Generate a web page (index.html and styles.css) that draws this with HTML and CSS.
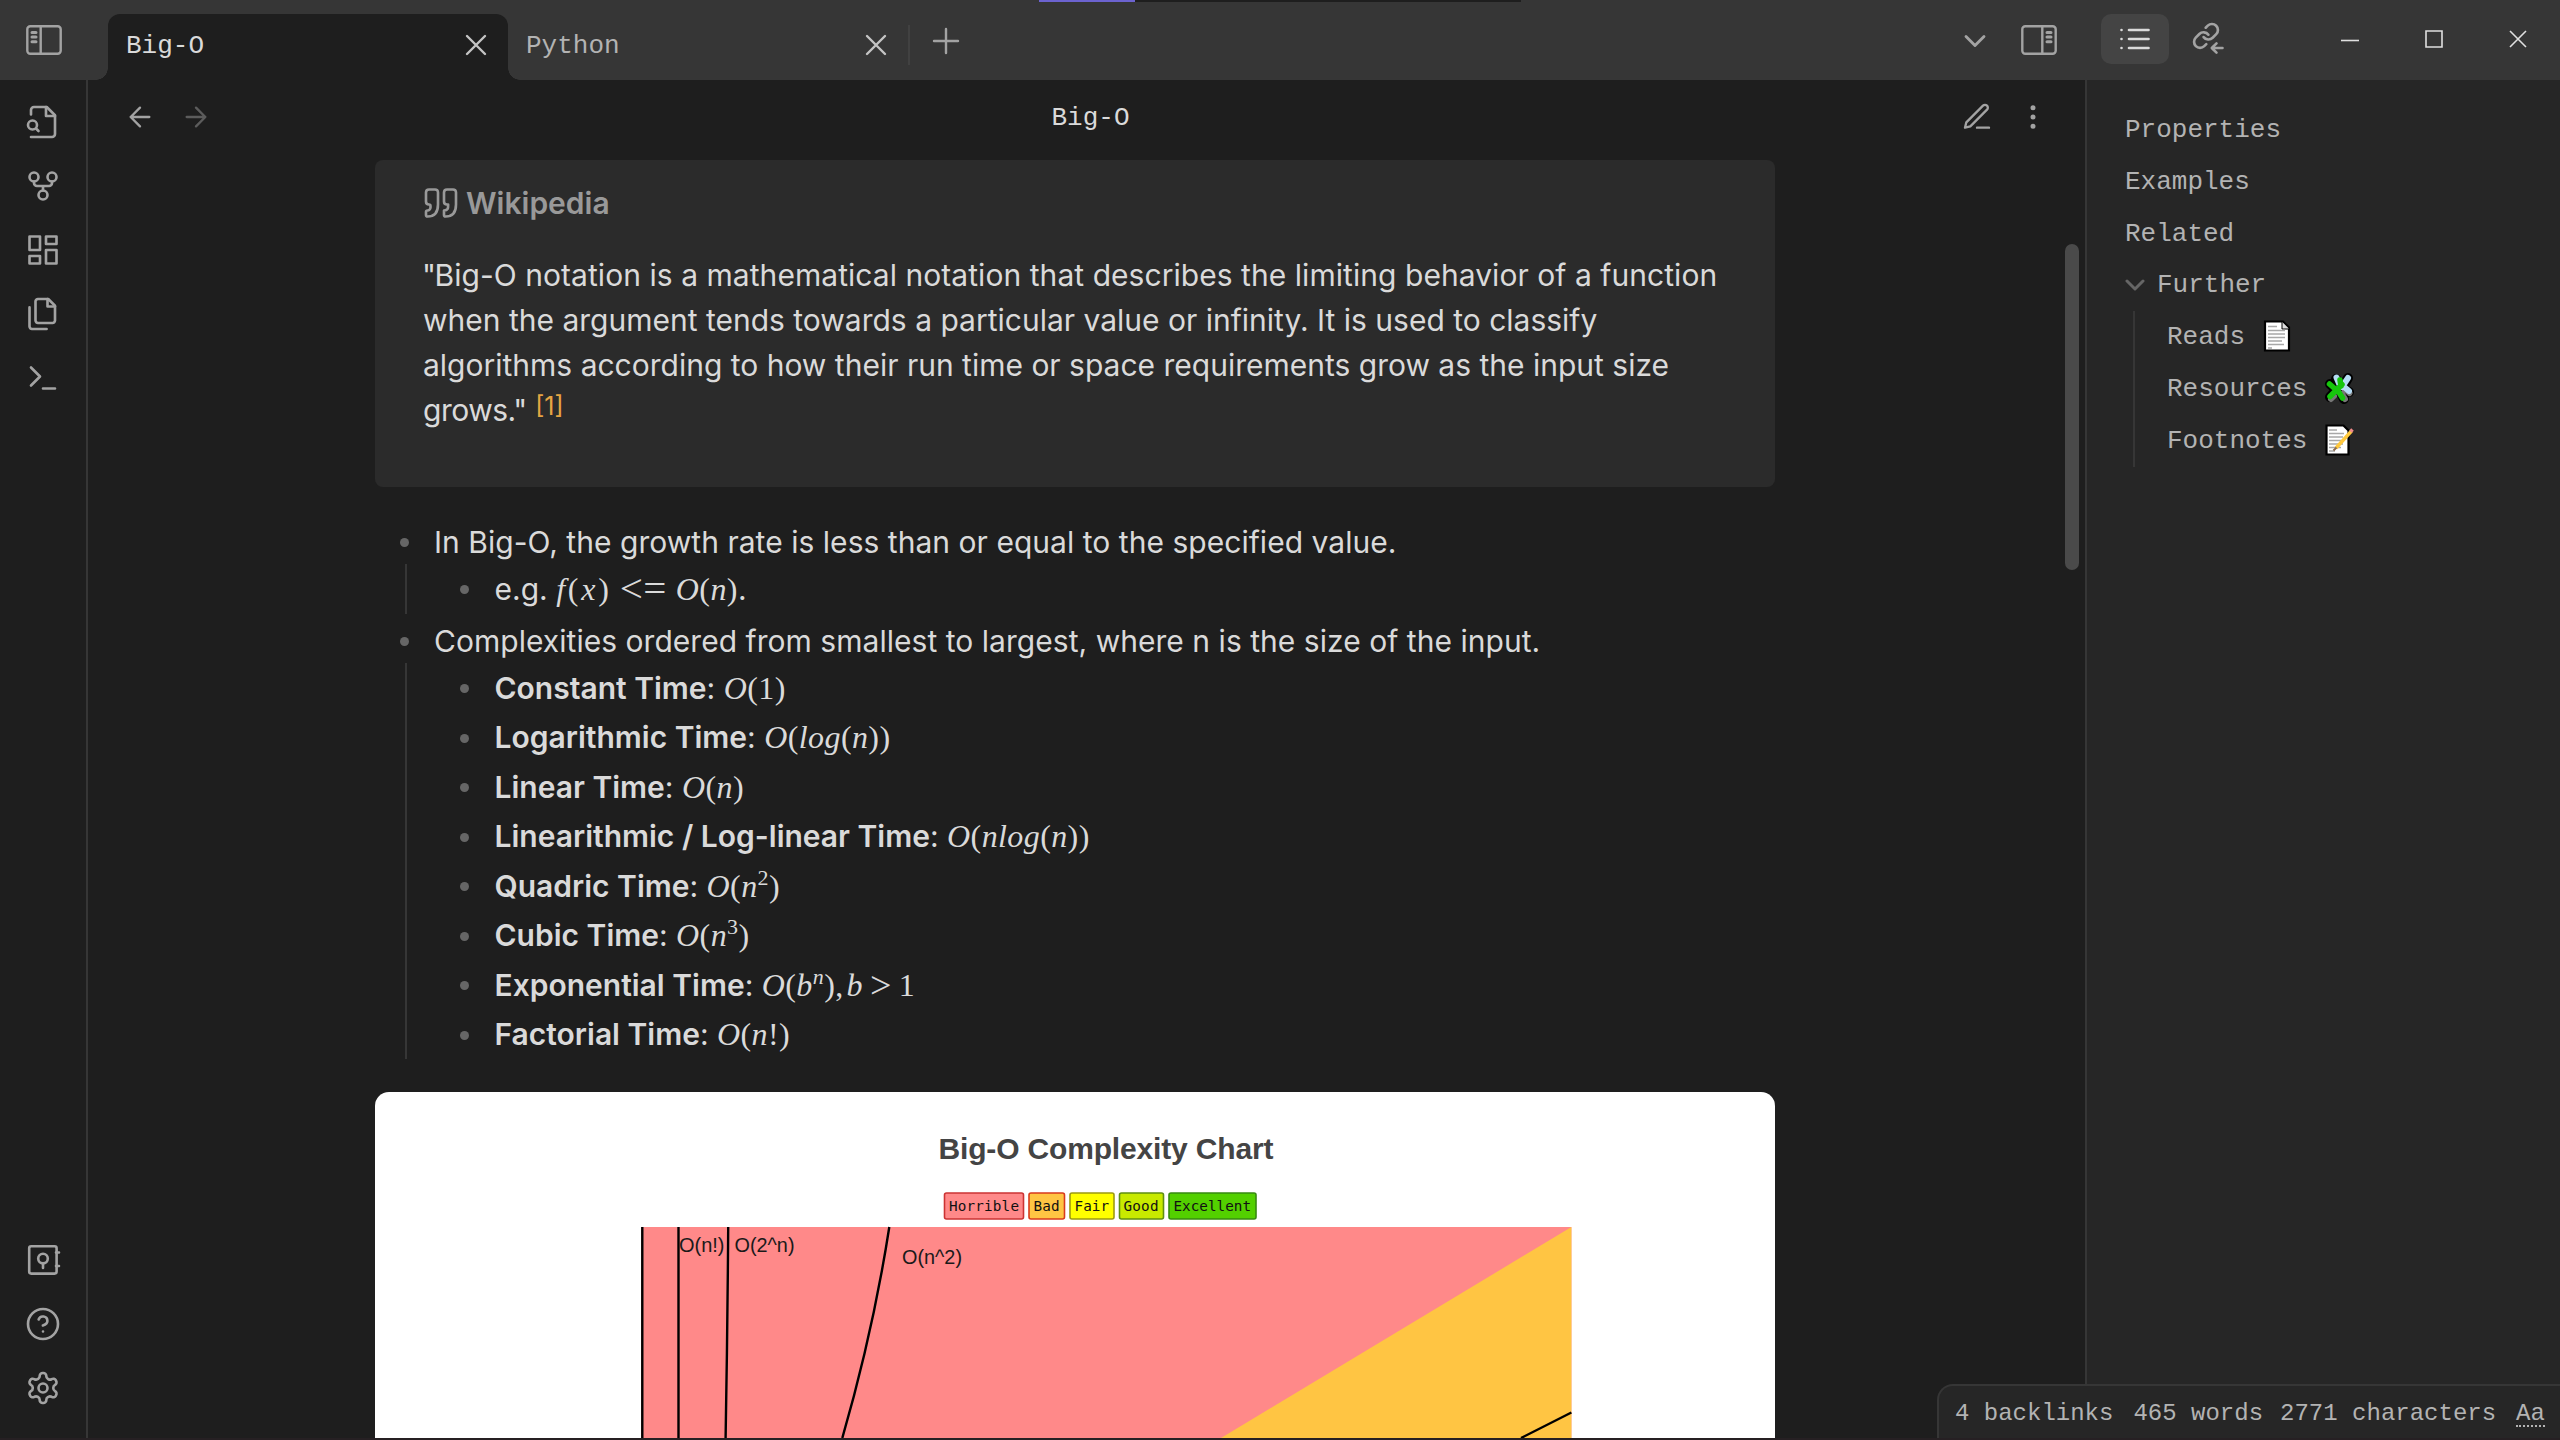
FILE: index.html
```html
<!DOCTYPE html>
<html lang="en">
<head>
<meta charset="utf-8">
<title>Big-O</title>
<link rel="stylesheet" href="styles.css">
</head>
<body>
<div class="app">
  <header class="titlebar">
    <div class="titlebar-left">
      <svg class="panel-icon" viewBox="0 0 36 30"><rect x="1.3" y="1.3" width="33.4" height="27.4" rx="3"/><path d="M14.7 1.5v27"/><path class="thick" d="M6 7.5h4M6 12h4M6 16.7h4"/></svg>
    </div>
    <div class="tab active">
      <span>Big-O</span>
      <svg class="icon close" viewBox="0 0 24 24"><path d="M18 6 6 18M6 6l12 12"/></svg>
    </div>
    <div class="tab">
      <span>Python</span>
      <svg class="icon close" viewBox="0 0 24 24"><path d="M18 6 6 18M6 6l12 12"/></svg>
    </div>
    <div class="tab-divider"></div>
    <svg class="icon new-tab" viewBox="0 0 24 24"><path d="M4 12h16M12 4v16"/></svg>
    <div class="titlebar-right">
      <svg class="icon chevron" viewBox="0 0 24 24"><path d="m6 9 6 6 6-6"/></svg>
      <svg class="panel-icon" viewBox="0 0 36 30"><rect x="1.3" y="1.3" width="33.4" height="27.4" rx="3"/><path d="M21.3 1.5v27"/><path class="thick" d="M26 7.5h4M26 12h4M26 16.7h4"/></svg>
      <div class="side-tab"><svg class="icon" viewBox="0 0 24 24"><path d="M8 6h13M8 12h13M8 18h13M3 6h.01M3 12h.01M3 18h.01"/></svg></div>
      <svg class="links-icon" viewBox="0 0 36 36"><g transform="translate(1.6 1.5) scale(1.2)"><path d="M10 13a5 5 0 0 0 7.54.54l3-3a5 5 0 0 0-7.07-7.07l-1.72 1.71M14 11a5 5 0 0 0-7.54-.54l-3 3a5 5 0 0 0 7.07 7.07l1.71-1.71"/></g><path d="M32.500 28H22M26.500 23.300l-4.700 4.700 4.700 4.700"/></svg>
      <div class="window-controls">
        <svg viewBox="0 0 20 20"><path d="M1 11.500h18"/></svg>
        <svg viewBox="0 0 20 20"><path d="M2 2h16v16H2z"/></svg>
        <svg viewBox="0 0 20 20"><path d="M2 2l16 16M18 2 2 18"/></svg>
      </div>
    </div>
  </header>

  <div class="body">
    <nav class="ribbon">
      <svg class="icon" viewBox="0 0 24 24"><path d="M4 22h14a2 2 0 0 0 2-2V7.500L14.500 2H6a2 2 0 0 0-2 2v3"/><path d="M14 2v6h6"/><circle cx="5" cy="14" r="3"/><path d="m9 18-1.500-1.500"/></svg>
      <svg class="icon" viewBox="0 0 24 24"><circle cx="12" cy="18" r="3"/><circle cx="6" cy="6" r="3"/><circle cx="18" cy="6" r="3"/><path d="M18 9v1a2 2 0 0 1-2 2H8a2 2 0 0 1-2-2V9M12 12v3"/></svg>
      <svg class="icon" viewBox="0 0 24 24"><path d="M3 3h7v9H3zM14 3h7v5h-7zM14 12h7v9h-7zM3 16h7v5H3z"/></svg>
      <svg class="icon" viewBox="0 0 24 24"><path d="M15.500 2H8.600c-.4 0-.8.2-1.100.5-.3.3-.5.7-.5 1.100v12.800c0 .4.2.8.5 1.100.3.3.7.5 1.100.5h9.800c.4 0 .8-.2 1.100-.5.3-.3.5-.7.5-1.100V6.500L15.500 2z"/><path d="M3 7.600v12.800c0 .4.2.8.5 1.100.3.3.7.5 1.100.5h9.800M15 2v5h5"/></svg>
      <svg class="icon" viewBox="0 0 24 24"><path d="m4 17 6-6-6-6M12 19h8"/></svg>
      <svg class="icon vault" viewBox="0 0 36 36"><rect x="4.200" y="4.200" width="27.400" height="27.400" rx="2"/><circle cx="18" cy="16.600" r="4.800"/><path d="M18 21.500V26M31 10.500h3M31 24h3"/></svg>
      <svg class="icon" viewBox="0 0 24 24"><circle cx="12" cy="12" r="10"/><path d="M9.090 9a3 3 0 0 1 5.830 1c0 2-3 3-3 3M12 17h.01"/></svg>
      <svg class="icon" viewBox="0 0 24 24"><path d="M12.220 2h-.44a2 2 0 0 0-2 2v.18a2 2 0 0 1-1 1.730l-.43.25a2 2 0 0 1-2 0l-.15-.08a2 2 0 0 0-2.730.73l-.22.38a2 2 0 0 0 .73 2.730l.15.1a2 2 0 0 1 1 1.720v.51a2 2 0 0 1-1 1.740l-.15.09a2 2 0 0 0-.73 2.730l.22.38a2 2 0 0 0 2.730.73l.15-.08a2 2 0 0 1 2 0l.43.25a2 2 0 0 1 1 1.730V20a2 2 0 0 0 2 2h.44a2 2 0 0 0 2-2v-.18a2 2 0 0 1 1-1.730l.43-.25a2 2 0 0 1 2 0l.15.08a2 2 0 0 0 2.730-.73l.22-.39a2 2 0 0 0-.73-2.730l-.15-.08a2 2 0 0 1-1-1.740v-.5a2 2 0 0 1 1-1.740l.15-.09a2 2 0 0 0 .73-2.730l-.22-.38a2 2 0 0 0-2.730-.73l-.15.08a2 2 0 0 1-2 0l-.43-.25a2 2 0 0 1-1-1.730V4a2 2 0 0 0-2-2z"/><circle cx="12" cy="12" r="3"/></svg>
    </nav>

    <main class="view">
      <div class="view-header">
        <div class="nav">
          <svg class="icon" viewBox="0 0 24 24"><path d="m12 19-7-7 7-7M19 12H5"/></svg>
          <svg class="icon dim" viewBox="0 0 24 24"><path d="M5 12h14M12 5l7 7-7 7"/></svg>
        </div>
        <span class="view-title">Big-O</span>
        <div class="nav actions">
          <svg class="icon" viewBox="0 0 24 24"><path d="M12 20h9M16.500 3.500a2.121 2.121 0 0 1 3 3L7 19l-4 1 1-4L16.500 3.500z"/></svg>
          <svg class="icon dots" viewBox="0 0 24 24"><circle cx="12" cy="5" r="1"/><circle cx="12" cy="12" r="1"/><circle cx="12" cy="19" r="1"/></svg>
        </div>
      </div>

      <article class="note">
        <section class="callout">
          <div class="callout-title">
            <svg class="icon" viewBox="0 0 24 24"><path d="M3 21c3 0 7-1 7-8V5c0-1.250-.756-2.017-2-2H4c-1.250 0-2 .75-2 1.972V11c0 1.250.75 2 2 2 1 0 1 0 1 1v1c0 1-1 2-2 2s-1 .008-1 1.031V20c0 1 0 1 1 1zM15 21c3 0 7-1 7-8V5c0-1.250-.757-2.017-2-2h-4c-1.250 0-2 .75-2 1.972V11c0 1.250.75 2 2 2h.75c0 2.250.25 4-2.750 4v3c0 1 0 1 1 1z"/></svg>
            <span>Wikipedia</span>
          </div>
          <p><q>"</q><span class="loose">Big-O notation is a mathematical notation that describes the limiting behavior of a function</span><br>when the argument tends towards a particular value or infinity. It is used to classify<br>algorithms according to how their run time or space requirements grow as the input size<br><span class="tight">grows."</span> <sup>[1]</sup></p>
        </section>

        <ul class="list">
          <li><span class="loose">In Big-O, the growth rate is less than or equal to the specified value.</span>
            <ul>
              <li>e.g. <span class="math"><span class="fx"><i>f</i>(<i>x</i>)</span><b class="rel wide">&lt;=</b><i>O</i>(<i>n</i>)</span>.</li>
            </ul>
          </li>
          <li><span class="loose">Complexities ordered from smallest to largest, where n is the size of the input.</span>
            <ul>
              <li><strong>Constant Time</strong>: <span class="math"><i>O</i>(1)</span></li>
              <li><strong>Logarithmic Time</strong>: <span class="math"><i>O</i>(<i>log</i>(<i>n</i>))</span></li>
              <li><strong>Linear Time</strong>: <span class="math"><i>O</i>(<i>n</i>)</span></li>
              <li><strong>Linearithmic / Log-linear Time</strong>: <span class="math"><i>O</i>(<i>nlog</i>(<i>n</i>))</span></li>
              <li><strong>Quadric Time</strong>: <span class="math"><i>O</i>(<i>n</i><span class="exp">2</span>)</span></li>
              <li><strong>Cubic Time</strong>: <span class="math"><i>O</i>(<i>n</i><span class="exp">3</span>)</span></li>
              <li><strong>Exponential Time</strong>: <span class="math"><i>O</i>(<i>b</i><i class="exp">n</i>),<i class="after-comma">b</i><b class="rel">&gt;</b>1</span></li>
              <li><strong>Factorial Time</strong>: <span class="math"><i>O</i>(<i>n</i>!)</span></li>
            </ul>
          </li>
        </ul>

        <figure class="chart">
          <svg viewBox="0 0 1400 346">
            <text class="chart-title" x="563.500" y="67" textLength="335">Big-O Complexity Chart</text>
            <g class="legend">
              <rect x="569.500" y="101" width="79" height="26" rx="2" fill="#ff8989" stroke="#cc3333"/>
              <rect x="654" y="101" width="35.500" height="26" rx="2" fill="#ffc543" stroke="#d83a1c"/>
              <rect x="695" y="101" width="44" height="26" rx="2" fill="#ffff00" stroke="#9c9a10"/>
              <rect x="744.500" y="101" width="44" height="26" rx="2" fill="#c8ea00" stroke="#5f8f12"/>
              <rect x="794" y="101" width="87" height="26" rx="2" fill="#53d000" stroke="#378a10"/>
              <text x="574" y="119" textLength="70">Horrible</text>
              <text x="658.500" y="119" textLength="26">Bad</text>
              <text x="699.500" y="119" textLength="34.500">Fair</text>
              <text x="748.500" y="119" textLength="35">Good</text>
              <text x="798.500" y="119" textLength="77.500">Excellent</text>
            </g>
            <path fill="#ff8989" d="M266 135h930.400v211H266z"/>
            <path fill="#ffc543" d="M1196.400 135v211H846z"/>
            <g class="curves">
              <path d="M267.300 135v211M303.500 135v211M353.200 135Q352.500 240 350.600 346M514.300 135Q498 240 467.300 346M1146 346 1196.400 320.500"/>
            </g>
            <g class="labels">
              <text x="304" y="159.500" textLength="45.500" lengthAdjust="spacingAndGlyphs">O(n!)</text>
              <text x="359.500" y="159.500" textLength="60" lengthAdjust="spacingAndGlyphs">O(2^n)</text>
              <text x="527" y="172" textLength="60" lengthAdjust="spacingAndGlyphs">O(n^2)</text>
            </g>
          </svg>
        </figure>
      </article>
      <div class="scroll-thumb"></div>
    </main>

    <aside class="outline">
      <div class="item">Properties</div>
      <div class="item">Examples</div>
      <div class="item">Related</div>
      <div class="item parent"><svg viewBox="0 0 20 20"><path d="m2 6 8 8 8-8"/></svg>Further</div>
      <div class="children">
        <div class="item">Reads
          <svg class="emoji" viewBox="0 0 30 32"><path d="M3 1.500h18l6 6v23H3z" fill="#fff" stroke="#000" stroke-width="2.200"/><path d="M20 2v7h7" fill="#ddd" stroke="#000" stroke-width="1"/><path d="M6 6.500h9M6 10.500h17M6 14h17M6 17.500h17M6 21h14M6 24.500h16M6 28h4" stroke="#a8a8a8" stroke-width="1.600"/></svg></div>
        <div class="item">Resources
          <svg class="emoji" viewBox="0 0 30 32"><g stroke-linecap="round" fill="none"><path d="M6 12l8 7M12 7l5 8M24 6l-7 12M6 25l9-10M20 27l-5-10M25 20l-8-5" stroke="#000" stroke-width="10"/><path d="M25.500 21l-7-6M21 27l-3-5M7 27l3-3" stroke="#777" stroke-width="6"/><path d="M12.500 5.500l3 7M24 6l-6 9M25 19l-6-5" stroke="#b5dcf5" stroke-width="6"/><path d="M5.500 12l8 7M6 24.500l12-12M18.500 26l-5-8M16 8l1 6" stroke="#16c60c" stroke-width="5.500"/></g></svg></div>
        <div class="item">Footnotes
          <svg class="emoji" viewBox="0 0 30 32"><path d="M2.500 1.500h17l5 5v24h-22z" fill="#fff" stroke="#000" stroke-width="2.200"/><path d="M5 6h8M5 9.500h15M5 13h14M5 16.500h12M5 20h14M5 23.500h12M5 27h6" stroke="#a8a8a8" stroke-width="1.600"/><path d="M27.500 7 12 24" stroke="#ffc83d" stroke-width="3.400"/><path d="M28.500 5.500l-2 2.200" stroke="#f08a8a" stroke-width="3.400"/><path d="m12.500 23.500-3 3" stroke="#8a6a50" stroke-width="2"/></svg></div>
      </div>
    </aside>
  </div>

  <div class="progress"><div class="progress-value"></div></div>
  <footer class="status">
    <span class="backlinks">4 backlinks</span><span class="words">465 words</span><span class="chars">2771 characters</span><span class="case">Aa</span>
  </footer>
  <div class="bottom-edge"></div>
</div>
</body>
</html>
```

FILE: styles.css
```css
* { box-sizing: border-box; }

body {
  margin: 0;
  background: #1e1e1e;
  color: #dadada;
  font-family: "Inter", sans-serif;
  font-size: 30px;
  overflow: hidden;
}

svg { display: block; flex: none; fill: none; }

.app {
  position: relative;
  display: flex;
  flex-direction: column;
  width: 2560px;
  height: 1440px;
  overflow: hidden;
}

.icon {
  width: 36px;
  height: 36px;
  stroke: #a3a3a3;
  stroke-width: 1.75;
  stroke-linecap: round;
  stroke-linejoin: round;
}

/* Title bar */
.titlebar {
  display: flex;
  flex: none;
  height: 80px;
  background: #363636;
  font-family: "Liberation Mono", monospace;
  font-size: 26px;
}
.titlebar-left { width: 108px; padding: 25px 0 0 26px; }
.panel-icon { width: 36px; height: 30px; stroke: #a3a3a3; stroke-width: 2.4; stroke-linecap: round; }
.panel-icon .thick { stroke-width: 3; }
.tab {
  position: relative;
  display: flex;
  align-items: center;
  justify-content: space-between;
  width: 400px;
  height: 66px;
  margin-top: 14px;
  padding: 0 14px 4px 18px;
  color: #b3b3b3;
}
.tab span { padding-top: 2px; }
.tab.active { background: #1e1e1e; border-radius: 12px 12px 0 0; color: #dadada; }
.tab.active::before, .tab.active::after {
  content: "";
  position: absolute;
  bottom: 0;
  width: 12px;
  height: 12px;
}
.tab.active::before { left: -12px; background: radial-gradient(circle at 0 0, transparent 11.5px, #1e1e1e 12px); }
.tab.active::after { right: -12px; background: radial-gradient(circle at 100% 0, transparent 11.5px, #1e1e1e 12px); }
.close { stroke: #c4c4c4; stroke-width: 1.6; }
.tab-divider { width: 2px; height: 40px; margin-top: 25px; background: #414141; }
.new-tab { margin: 23px 0 0 18px; stroke-width: 1.6; }
.titlebar-right { display: flex; margin-left: auto; padding-right: 32px; }
.chevron { margin: 23px 28px 0 0; stroke-width: 1.9; }
.titlebar-right .panel-icon { margin-top: 25px; }
.side-tab {
  display: flex;
  align-items: center;
  justify-content: center;
  width: 68px;
  height: 50px;
  margin: 14px 21px 0 44px;
  border-radius: 10px;
  background: #444;
}
.side-tab .icon { stroke: #dadada; }
.links-icon { width: 36px; height: 36px; margin-top: 20px; stroke: #a3a3a3; stroke-width: 2.6; stroke-linecap: round; stroke-linejoin: round; }
.links-icon g { stroke-width: 2.2; }
.window-controls { display: flex; gap: 64px; margin: 29px 0 0 114px; }
.window-controls svg { width: 20px; height: 20px; stroke: #e0e0e0; stroke-width: 1.6; }

/* Layout */
.body { display: flex; flex: 1; min-height: 0; }
.ribbon {
  display: flex;
  flex: none;
  flex-direction: column;
  gap: 28px;
  width: 88px;
  padding: 24px 0 34px 25px;
  border-right: 2px solid #363636;
}
.ribbon .vault { margin-top: auto; stroke-width: 2.6; }
.view { position: relative; display: flex; flex-direction: column; width: 1997px; }
.view-header { display: flex; flex: none; align-items: flex-start; height: 80px; padding: 21px 36px 0; }
.nav { display: flex; gap: 24px; flex: 1; }
.nav.actions { justify-content: flex-end; }
.nav .icon { width: 32px; height: 32px; }
.nav .dim { stroke: #5c5c5c; }
.nav .dots { fill: #a3a3a3; }
.view-title { width: 78px; margin: 2px -4px 0 4px; font: 26px/30px "Liberation Mono", monospace; }
.note { width: 1400px; margin-left: 287px; }
.scroll-thumb { position: absolute; right: 6px; top: 164px; width: 14px; height: 326px; border-radius: 7px; background: #4a4a4a; }

/* Callout */
.callout { height: 327px; padding: 24px 48px; border-radius: 8px; background: #2b2b2b; }
.callout-title { display: flex; align-items: center; gap: 7px; height: 38px; color: #999; font-weight: 600; }
.callout-title .icon { stroke: #999; }
.callout p { margin: 31px 0 0; line-height: 45px; white-space: nowrap; }
.callout sup { color: #e5a543; font-size: 25px; line-height: 0; vertical-align: 6px; }
.loose { letter-spacing: .05px; }
.tight { letter-spacing: -.5px; }
q { quotes: none; letter-spacing: -1.5px; margin-left: -1px; }

/* Lists */
.list { margin: 30px 0; line-height: 45px; }
ul { margin: 0; padding: 0; list-style: none; }
li { position: relative; padding: 2.25px 0; }
.list > li { padding-left: 59px; }
.list > li > .loose { position: relative; top: 1px; letter-spacing: .035px; }
.list ul { position: relative; padding-left: 60.5px; }
.list ul::before { content: ""; position: absolute; left: -29px; top: 0; bottom: 0; width: 2px; background: #363636; }
li::before {
  content: "";
  position: absolute;
  left: 25px;
  top: 21px;
  width: 9px;
  height: 9px;
  border-radius: 50%;
  background: #666;
}
.list ul li::before { left: -35px; }
strong { font-weight: 600; }

/* Formulas */
.math { font: 32px/1 "Liberation Serif", serif; letter-spacing: .4px; }
.math .fx { letter-spacing: 2.8px; }
.math .rel { font-weight: 400; font-size: 38px; line-height: 0; margin: 0 7px; vertical-align: -2px; }
.math .wide { font-size: 41px; margin: 0 9px 0 8px; }
.math .exp { font-size: 22px; line-height: 0; vertical-align: 12px; }
.math .after-comma { margin-left: 3px; }

/* Chart */
.chart { height: 346px; margin: 0; border-radius: 14px 14px 0 0; background: #fff; overflow: hidden; }
.chart svg { width: 1400px; height: 346px; }
.chart-title { font: bold 30px "Liberation Sans", sans-serif; fill: #444; }
.legend { stroke-width: 1.6; }
.legend text { font: 14.3px "DejaVu Sans Mono", monospace; fill: #111; }
.curves { stroke: #000; stroke-width: 2.4; }
.labels text { font: 21px "Liberation Sans", sans-serif; fill: #1a1a1a; }

/* Outline */
.outline {
  flex: 1;
  padding: 24px 0 0 38px;
  border-left: 2px solid #363636;
  background: #262626;
  color: #b3b3b3;
  font: 26px/52px "Liberation Mono", monospace;
}
.item { display: flex; align-items: center; height: 52px; }
.parent { height: 50px; }
.parent svg { width: 20px; height: 20px; margin: 0 12px 0 0; stroke: #666; stroke-width: 3; stroke-linecap: round; stroke-linejoin: round; }
.children { margin: 1px 0 0 8px; padding-left: 32px; border-left: 2px solid #363636; }
.emoji { width: 30px; height: 32px; margin: -2px 0 0 17px; }

/* Overlays on the window edges */
.progress { position: absolute; left: 1039px; top: 0; width: 482px; height: 2px; background: #1e1e1e; }
.progress-value { width: 96px; height: 2px; background: #6c63d0; }
.status {
  position: absolute;
  right: 0;
  bottom: 2px;
  display: flex;
  width: 623px;
  height: 54px;
  padding: 14px 0 0 16px;
  border: solid #363636;
  border-width: 2px 0 0 2px;
  border-radius: 16px 0 0 0;
  background: #262626;
  color: #b3b3b3;
  font: 24px/28px "Liberation Mono", monospace;
  white-space: nowrap;
}
.backlinks { margin-right: 20px; }
.words { margin-right: 17px; }
.chars { margin-right: 20px; }
.case { height: 27px; border-bottom: 2px dotted #b3b3b3; }
.bottom-edge { position: absolute; left: 0; bottom: 0; width: 2560px; height: 2px; background: #262023; }
```
